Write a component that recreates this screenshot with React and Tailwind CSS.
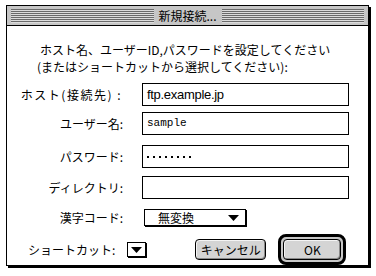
import React from 'react';

const jp = { fontFamily: '"Noto Sans CJK JP", "Noto Sans", sans-serif' };

function PopupArrow({ className = '' }) {
  return (
    <svg width="11" height="6" viewBox="0 0 11 6" className={className}>
      <polygon points="0,0 11,0 5.5,6" fill="#000" />
    </svg>
  );
}

function FieldRow({ label, children, className = '', labelClass = '' }) {
  return (
    <div className={`flex items-center ${className}`}>
      <div className={`w-[116px] whitespace-pre text-right text-[12px] leading-none text-black ${labelClass}`}>{label}</div>
      <div className="ml-[19px] flex h-[23px] w-[207px] items-center border border-black bg-white pl-[4px]">
        {children}
      </div>
    </div>
  );
}

export default function App() {
  return (
    <div className="h-[276px] w-[376px] overflow-hidden bg-white pl-[6px] pt-[5px]" style={jp}>
      {/* Window */}
      <div className="flex h-[261px] w-[363px] flex-col border border-black bg-white shadow-[2px_2px_0_#000]">
        {/* Title bar */}
        <div className="flex h-[20px] items-center border-b border-black bg-[#c6c6c6] px-[4px]">
          <div className="h-[14px] flex-1 bg-[repeating-linear-gradient(to_bottom,#6a6a6a_0px,#6a6a6a_1px,#dcdcdc_1px,#dcdcdc_2px)]" />
          <div className="px-[5px] text-[12px] leading-none text-black">新規接続...</div>
          <div className="h-[14px] flex-1 bg-[repeating-linear-gradient(to_bottom,#6a6a6a_0px,#6a6a6a_1px,#dcdcdc_1px,#dcdcdc_2px)]" />
        </div>

        {/* Message */}
        <div className="pl-[30px] pt-[15px] text-[12px] leading-[17px] text-black">
          <p className="pl-[3px]">ホスト名、ユーザーID,パスワードを設定してください</p>
          <p>(またはショートカットから選択してください):</p>
        </div>

        {/* Fields */}
        <FieldRow label="ホスト(接続先) :" labelClass="tracking-[1.5px] pr-[1px]" className="mt-[8px]">
          <span className="text-[13px] tracking-[-0.3px]" style={{ fontFamily: '"Liberation Sans", sans-serif' }}>
            ftp.example.jp
          </span>
        </FieldRow>
        <FieldRow label="ユーザー名:" className="mt-[6px]">
          <span className="text-[11px]" style={{ fontFamily: '"Liberation Mono", monospace' }}>
            sample
          </span>
        </FieldRow>
        <FieldRow label="パスワード:" className="mt-[10px]">
          <div className="flex gap-[4px]">
            {[0, 1, 2, 3, 4, 5, 6, 7].map((i) => (
              <span key={i} className="block h-[2px] w-[2px] bg-black" />
            ))}
          </div>
        </FieldRow>
        <FieldRow label="ディレクトリ:" className="mt-[8px]" />

        {/* Kanji code */}
        <div className="mt-[10px] flex items-center">
          <div className="w-[116px] text-right text-[12px] leading-none text-black">漢字コード:</div>
          <div className="ml-[21px] flex h-[17px] w-[102px] items-center border border-black bg-white pl-[13px] pr-[6px] shadow-[1px_1px_0_#000]">
            <span className="flex-1 text-[12px] leading-none">無変換</span>
            <PopupArrow />
          </div>
        </div>

        {/* Bottom row */}
        <div className="mt-[8px] flex items-center">
          <div className="ml-[21px] text-[12px] leading-none text-black">ショートカット:</div>
          <div className="ml-[12px] flex h-[15px] w-[19px] items-center justify-center border border-black bg-white shadow-[1px_1px_0_#000]">
            <PopupArrow />
          </div>
          <button className="ml-[49px] flex h-[21px] w-[71px] items-center justify-center rounded-[4px] border border-black bg-[#d4d4d4] text-[12px] leading-none text-black shadow-[inset_1px_1px_0_#f4f4f4,inset_-1px_-1px_0_#8a8a8a]">
            キャンセル
          </button>
          <div className="ml-[12px] flex h-[31px] w-[68px] items-center justify-center rounded-[8px] border-[3px] border-black bg-[#c8c8c8] p-[2px]">
            <button className="flex h-full w-full items-center justify-center rounded-[4px] border border-black bg-[#d4d4d4] text-[12px] leading-none text-black shadow-[inset_1px_1px_0_#f4f4f4,inset_-1px_-1px_0_#8a8a8a]">
              OK
            </button>
          </div>
        </div>
      </div>
    </div>
  );
}
